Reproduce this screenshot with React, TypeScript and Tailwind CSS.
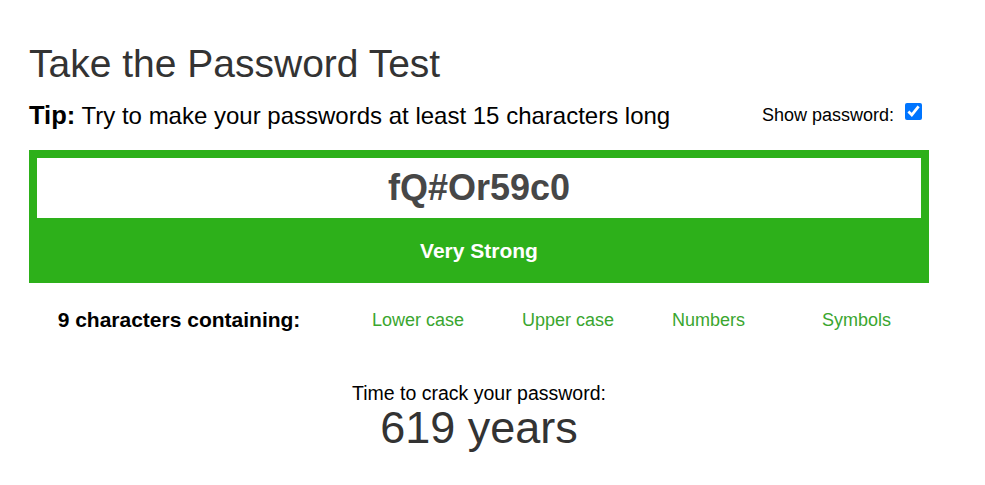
import { useState } from 'react';

const checks = ['Lower case', 'Upper case', 'Numbers', 'Symbols'];

function App() {
  const [show, setShow] = useState(true);

  return (
    <div className="min-h-screen bg-white font-['Liberation_Sans',Arial,sans-serif]">
      <div className="w-[900px] ml-[29px] pt-[41px]">
        <h1 className="text-[39px] leading-[46px] text-[#333]">
          Take the Password Test
        </h1>

        <div className="mt-[13px] flex items-center justify-between h-[30px]">
          <div className="text-[24px] text-black">
            <b className="text-[25.5px]">Tip:</b> Try to make your passwords at least 15 characters long
          </div>
          <label className="flex items-center gap-[11px] pr-[7px] text-[18px] text-black">
            Show password:
            <input
              type="checkbox"
              checked={show}
              onChange={() => setShow(!show)}
              className="w-[17px] h-[17px] m-0 -mt-[7px] accent-[#0075ff]"
            />
          </label>
        </div>

        <div className="mt-[20px] bg-[#2db01a] p-[8px] pb-0 h-[133px]">
          <div className="h-[60px] bg-white flex items-center justify-center">
            <span className="text-[36px] font-bold text-[#474747]">
              {show ? 'fQ#Or59c0' : '•••••••••'}
            </span>
          </div>
          <div className="h-[65px] flex items-center justify-center text-[21px] font-bold text-white">
            Very Strong
          </div>
        </div>

        <div className="flex items-center h-[74px]">
          <div className="w-[300px] text-center text-[21px] font-bold text-black">
            9 characters containing:
          </div>
          {checks.map((c) => (
            <div key={c} className="w-[150px] pl-[43px] text-[18px] text-[#3aa62f]">
              {c}
            </div>
          ))}
        </div>

        <div className="mt-[24px] text-center text-[19.5px] leading-[24px] text-black">
          Time to crack your password:
        </div>
        <div className="text-center text-[45px] leading-[46px] text-[#333]">
          619 years
        </div>
      </div>
    </div>
  );
}

export default App;
